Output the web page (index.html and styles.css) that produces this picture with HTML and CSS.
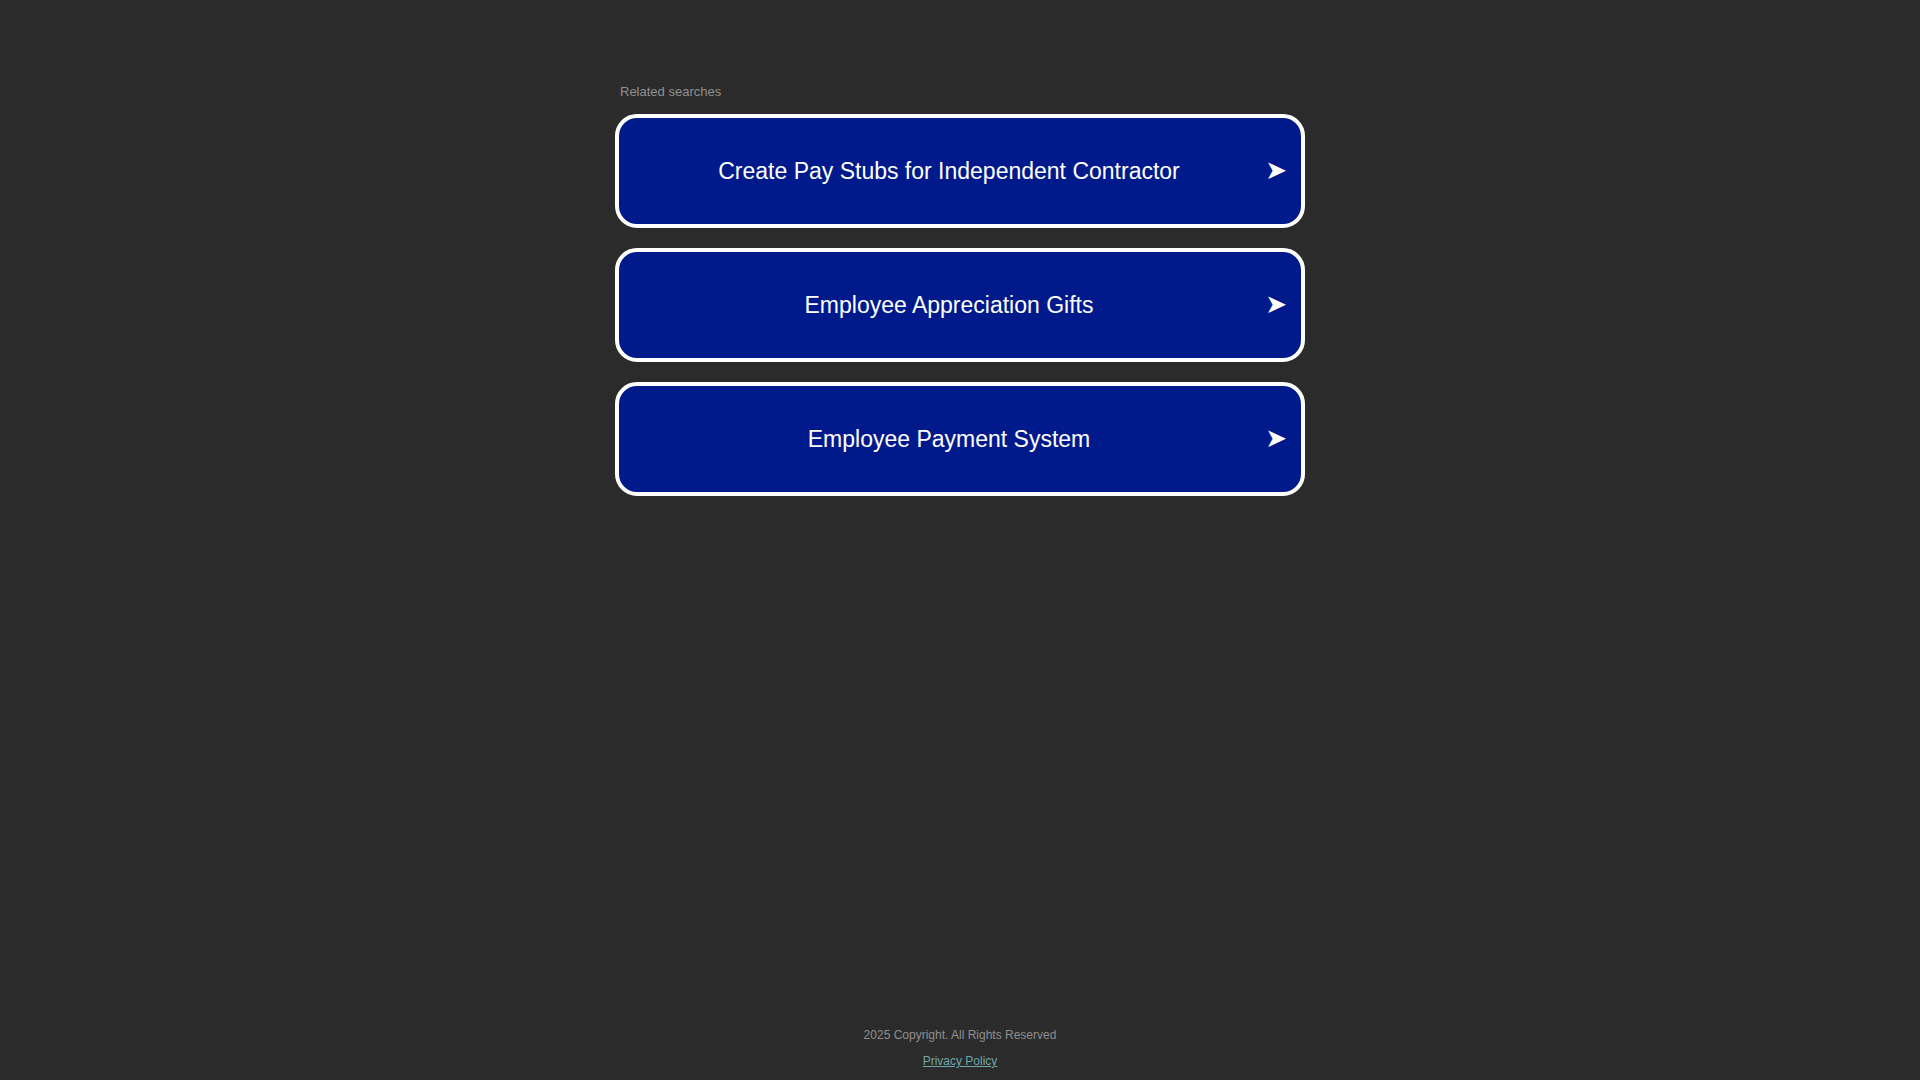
FILE: index.html
```html
<!DOCTYPE html>
<html lang="en">
<head>
<meta charset="utf-8">
<title>Related searches</title>
<link rel="stylesheet" href="styles.css">
</head>
<body>
<main class="page">
  <section class="ads">
    <div class="ads-title">Related searches</div>
    <ul class="ads-list">
      <li><a class="ad-link" href="#"><span class="ad-text">Create Pay Stubs for Independent Contractor</span><span class="ad-arrow">&#10148;</span></a></li>
      <li><a class="ad-link" href="#"><span class="ad-text">Employee Appreciation Gifts</span><span class="ad-arrow">&#10148;</span></a></li>
      <li><a class="ad-link" href="#"><span class="ad-text">Employee Payment System</span><span class="ad-arrow">&#10148;</span></a></li>
    </ul>
  </section>
  <footer class="footer">
    <div class="copyright">2025 Copyright. All Rights Reserved</div>
    <a class="privacy" href="#">Privacy Policy</a>
  </footer>
</main>
</body>
</html>
```
FILE: styles.css
```css
html, body {
  margin: 0;
  padding: 0;
  background: #2b2b2b;
}
body {
  font-family: "Liberation Sans", Arial, sans-serif;
}
.page {
  min-height: 100vh;
  display: flex;
  flex-direction: column;
  align-items: center;
  box-sizing: border-box;
}
.ads {
  width: 690px;
  padding-top: 84px;
}
.ads-title {
  font-size: 13px;
  line-height: 15px;
  color: #909090;
  padding-left: 5px;
  margin-bottom: 15px;
}
.ads-list {
  list-style: none;
  margin: 0;
  padding: 0;
  display: flex;
  flex-direction: column;
  gap: 20px;
}
.ad-link {
  display: flex;
  align-items: center;
  height: 114px;
  box-sizing: border-box;
  border: 4px solid #ffffff;
  border-radius: 22px;
  background: #011a8b;
  padding: 0 14px;
  color: #ffffff;
  text-decoration: none;
}
.ad-text {
  flex: 1;
  text-align: center;
  font-size: 23px;
}
.ad-arrow {
  width: 22px;
  font-size: 26px;
  font-family: "DejaVu Sans", sans-serif;
  line-height: 1;
  text-align: right;
  margin-top: -2px;
}
.footer {
  margin-top: auto;
  display: flex;
  flex-direction: column;
  align-items: center;
  gap: 12px;
  padding-bottom: 12px;
  font-size: 12px;
  line-height: 14px;
}
.copyright {
  color: #8f8f8f;
}
.privacy {
  color: #6fa6a9;
  text-decoration: underline;
}
```
